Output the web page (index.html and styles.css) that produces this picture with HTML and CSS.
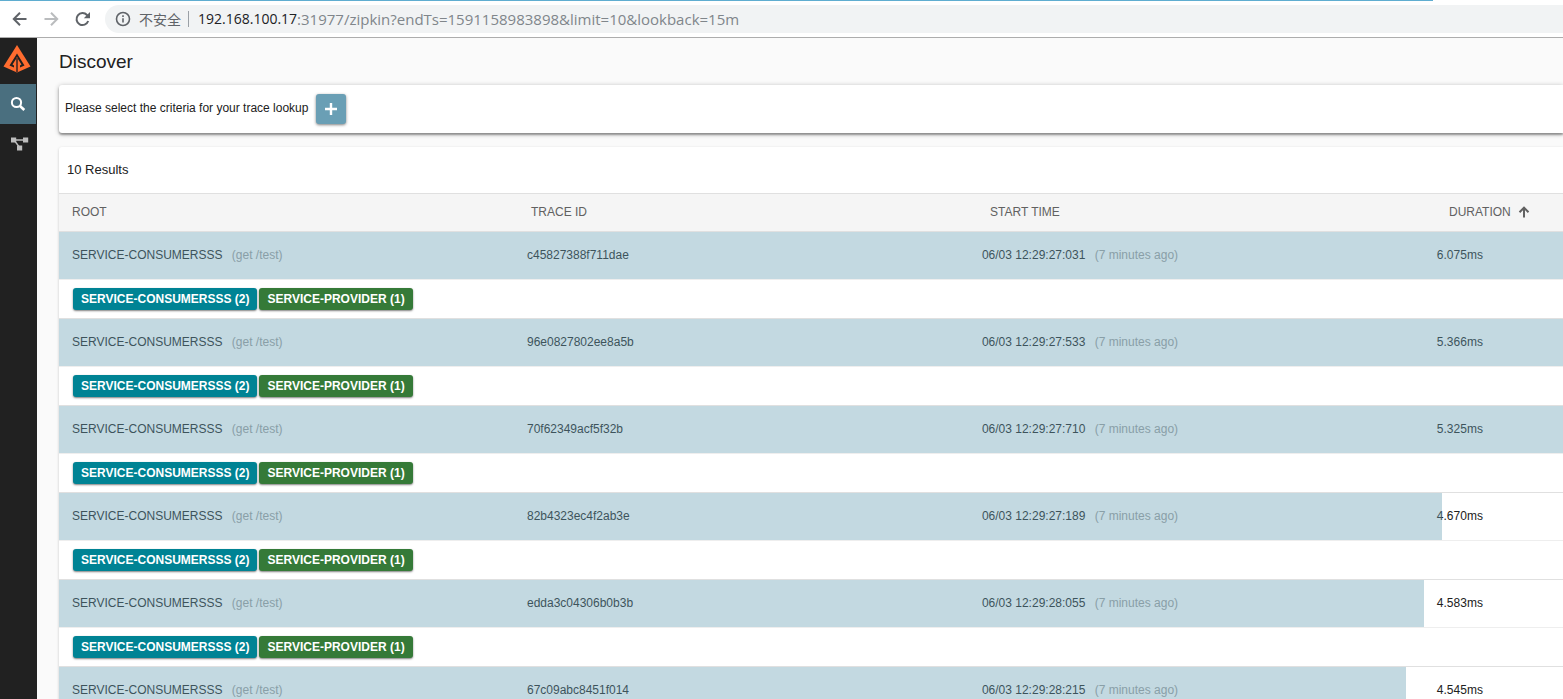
FILE: index.html
```
<!DOCTYPE html>
<html lang="en">
<head>
  <meta charset="UTF-8">
  <meta name="viewport" content="width=device-width, initial-scale=1.0">
  <title>Zipkin - Discover</title>
  <link rel="stylesheet" href="styles.css">
</head>
<body>
  <header class="browser-bar">
    <button class="nav-btn" aria-label="Back">
      <svg width="16" height="16" viewBox="0 0 16 16"><path d="M14.5 8H2M8 1.8L1.8 8L8 14.2"/></svg>
    </button>
    <button class="nav-btn disabled" aria-label="Forward">
      <svg width="16" height="16" viewBox="0 0 16 16"><path d="M1.5 8H14M8 1.8L14.2 8L8 14.2"/></svg>
    </button>
    <button class="nav-btn" aria-label="Reload">
      <svg width="16" height="16" viewBox="0 0 16 16"><path d="M14.2 10A6 6 0 1 1 13 4L14 5"/><path class="solid" d="M16 1V7.2H9.8Z"/></svg>
    </button>
    <div class="address">
      <svg class="info" width="16" height="16" viewBox="0 0 16 16"><circle cx="8" cy="8" r="6.5"/><path d="M8 7.2V11.6M8 4.3V6"/></svg>
      <span class="insecure">不安全</span>
      <label class="host" for="url">192.168.100.17</label>
      <input class="url" id="url" type="text" value=":31977/zipkin?endTs=1591158983898&amp;limit=10&amp;lookback=15m">
    </div>
  </header>

  <div class="app">
    <nav class="sidebar">
      <a class="logo" href="#" aria-label="Zipkin">
        <svg width="28" height="28" viewBox="0 0 28 28">
          <path fill="#ff6c2f" d="M14 0L27.5 21.5L14 27.5L0.5 21.5Z"/>
          <path fill="#212121" d="M14 8.5L21.5 20.5L17 22.6V20.4L18.5 19.6L14 12.5L9.5 19.6L11 20.4V22.6L6.5 20.5Z"/>
          <path fill="#6b3524" d="M13 12H15V27.2H13Z"/>
        </svg>
      </a>
      <a class="nav-link active" href="#" aria-label="Discover">
        <svg width="16" height="16" viewBox="0 0 16 16"><circle cx="6.5" cy="6.5" r="4.6" fill="none" stroke="#fff" stroke-width="2"/><path d="M10 10L14.3 14" stroke="#fff" stroke-width="2.6"/></svg>
      </a>
      <a class="nav-link" href="#" aria-label="Dependencies">
        <svg width="21" height="14" viewBox="-3 0 21 14"><path d="M3 3H15M3 3L9 11" stroke="#bdbdbd" stroke-width="1.4"/><path fill="#bdbdbd" d="M0 0.5H5.2V5.5H0ZM12 0.5H17.2V5.5H12ZM6 8.5H11.2V13.5H6Z"/></svg>
      </a>
    </nav>

    <main class="content">
      <h1>Discover</h1>
      <section class="paper search">
        <span class="hint">Please select the criteria for your trace lookup</span>
        <button class="add-btn" aria-label="Add criteria">
          <svg width="12" height="12" viewBox="0 0 12 12"><path d="M6 0V12M0 6H12" stroke="#fff" stroke-width="2.4"/></svg>
        </button>
      </section>

      <section class="paper results">
        <h2>10 Results</h2>
        <table class="traces">
          <thead>
            <tr>
              <th>ROOT</th>
              <th>TRACE ID</th>
              <th>START TIME</th>
              <th>
                <button class="sort-btn">DURATION
                  <svg width="12" height="12" viewBox="0 0 12 12"><path d="M6 11.5V2M1.5 6.2L6 1.7L10.5 6.2"/></svg>
                </button>
              </th>
            </tr>
          </thead>
          <tbody>
            <tr class="trace" style="--bar: 100%">
              <td>SERVICE-CONSUMERSSS <span class="sub">(get /test)</span></td>
              <td>c45827388f711dae</td>
              <td>06/03 12:29:27:031 <span class="sub">(7 minutes ago)</span></td>
              <td>6.075ms</td>
            </tr>
            <tr class="services">
              <td colspan="4"><span class="badge consumer">SERVICE-CONSUMERSSS (2)</span><span class="badge provider">SERVICE-PROVIDER (1)</span></td>
            </tr>
            <tr class="trace" style="--bar: 88%">
              <td>SERVICE-CONSUMERSSS <span class="sub">(get /test)</span></td>
              <td>96e0827802ee8a5b</td>
              <td>06/03 12:29:27:533 <span class="sub">(7 minutes ago)</span></td>
              <td>5.366ms</td>
            </tr>
            <tr class="services">
              <td colspan="4"><span class="badge consumer">SERVICE-CONSUMERSSS (2)</span><span class="badge provider">SERVICE-PROVIDER (1)</span></td>
            </tr>
            <tr class="trace" style="--bar: 87%">
              <td>SERVICE-CONSUMERSSS <span class="sub">(get /test)</span></td>
              <td>70f62349acf5f32b</td>
              <td>06/03 12:29:27:710 <span class="sub">(7 minutes ago)</span></td>
              <td>5.325ms</td>
            </tr>
            <tr class="services">
              <td colspan="4"><span class="badge consumer">SERVICE-CONSUMERSSS (2)</span><span class="badge provider">SERVICE-PROVIDER (1)</span></td>
            </tr>
            <tr class="trace" style="--bar: 76%">
              <td>SERVICE-CONSUMERSSS <span class="sub">(get /test)</span></td>
              <td>82b4323ec4f2ab3e</td>
              <td>06/03 12:29:27:189 <span class="sub">(7 minutes ago)</span></td>
              <td>4.670ms</td>
            </tr>
            <tr class="services">
              <td colspan="4"><span class="badge consumer">SERVICE-CONSUMERSSS (2)</span><span class="badge provider">SERVICE-PROVIDER (1)</span></td>
            </tr>
            <tr class="trace" style="--bar: 75%">
              <td>SERVICE-CONSUMERSSS <span class="sub">(get /test)</span></td>
              <td>edda3c04306b0b3b</td>
              <td>06/03 12:29:28:055 <span class="sub">(7 minutes ago)</span></td>
              <td>4.583ms</td>
            </tr>
            <tr class="services">
              <td colspan="4"><span class="badge consumer">SERVICE-CONSUMERSSS (2)</span><span class="badge provider">SERVICE-PROVIDER (1)</span></td>
            </tr>
            <tr class="trace" style="--bar: 74%">
              <td>SERVICE-CONSUMERSSS <span class="sub">(get /test)</span></td>
              <td>67c09abc8451f014</td>
              <td>06/03 12:29:28:215 <span class="sub">(7 minutes ago)</span></td>
              <td>4.545ms</td>
            </tr>
          </tbody>
        </table>
      </section>
    </main>
  </div>
</body>
</html>
```

FILE: styles.css
```
* {
  box-sizing: border-box;
  margin: 0;
  padding: 0;
}

body {
  display: flex;
  flex-direction: column;
  height: 100vh;
  overflow: hidden;
  font-family: "Liberation Sans", Arial, sans-serif;
  font-size: 12px;
  color: #212121;
  background-color: #fafafa;
}

button {
  border: none;
  background: none;
  font: inherit;
  color: inherit;
  cursor: pointer;
}

/* browser toolbar */
.browser-bar {
  display: flex;
  flex-shrink: 0;
  align-items: center;
  gap: 15px;
  height: 38px;
  padding-left: 12px;
  border-bottom: 1px solid #adadad;
  background: linear-gradient(#5fadd0, #5fadd0) left top / calc(100% - 130px) 1px no-repeat #fff;
}

.nav-btn {
  display: flex;
}

.nav-btn svg {
  fill: none;
  stroke: #5f6368;
  stroke-width: 2;
}

.nav-btn.disabled svg {
  stroke: #babcbe;
}

.nav-btn .solid {
  fill: #5f6368;
  stroke: none;
}

.address {
  display: flex;
  flex: 1;
  align-items: center;
  height: 28px;
  padding-left: 10px;
  border-radius: 14px 0 0 14px;
  background-color: #f1f3f4;
  font-family: "Open Sans", "Noto Sans CJK SC", sans-serif;
  font-size: 14px;
  color: #80868b;
}

.info {
  fill: none;
  stroke: #5f6368;
  stroke-width: 1.6;
}

.insecure {
  margin: 0 9px 0 8px;
  padding-right: 7px;
  border-right: 1px solid #9aa0a6;
  font-family: "Noto Sans CJK SC", sans-serif;
  line-height: 16px;
  color: #5f6368;
}

.host {
  color: #202124;
}

.url {
  flex: 1;
  border: none;
  outline: none;
  background: none;
  font: inherit;
  font-size: 15px;
  color: inherit;
}

/* application */
.app {
  display: flex;
  flex: 1;
  min-height: 0;
}

.sidebar {
  flex-shrink: 0;
  width: 37px;
  padding-right: 1px;
  background-color: #212121;
}

.logo,
.nav-link {
  display: flex;
  align-items: center;
  justify-content: center;
  height: 40px;
}

.logo {
  height: 46px;
  padding: 0 2px 4px 0;
}

.active {
  background-color: #4a6f7f;
}

.content {
  flex: 1;
  min-width: 0;
  padding-left: 22px;
}

h1 {
  font-size: 19px;
  font-weight: normal;
  line-height: 47px;
}

.paper {
  border-radius: 3px 0 0 3px;
  background-color: #fff;
}

.search {
  display: flex;
  align-items: center;
  gap: 8px;
  height: 48px;
  margin-bottom: 14px;
  padding-left: 6px;
  box-shadow: 0 1px 5px rgba(0, 0, 0, 0.3), 0 2px 2px rgba(0, 0, 0, 0.3);
}

.hint {
  padding-bottom: 2px;
}

.add-btn {
  display: flex;
  align-items: center;
  justify-content: center;
  width: 30px;
  height: 30px;
  border-radius: 3px;
  background-color: #6a9fb5;
  box-shadow: 0 1px 3px rgba(0, 0, 0, 0.5);
}

.results {
  overflow: hidden;
  box-shadow: 0 1px 3px rgba(0, 0, 0, 0.2);
}

h2 {
  padding-left: 8px;
  font-size: 13px;
  font-weight: normal;
  line-height: 46px;
}

/* the table is wider than the window and runs off its right edge */
.traces {
  display: block;
  width: 121%;
}

thead,
tbody {
  display: block;
}

tr {
  display: grid;
  align-items: center;
  grid-template-columns: repeat(4, 25%);
  border-bottom: 1px solid #e0e0e0;
}

th,
td {
  padding: 0 0 2px 13px;
  font-weight: normal;
  text-align: left;
}

thead tr {
  grid-template-columns: repeat(4, 459px);
  height: 39px;
  border-top: 1px solid #e0e0e0;
  background-color: #f5f5f5;
  color: #616161;
}

.sort-btn {
  display: flex;
  align-items: center;
  gap: 7px;
}

.sort-btn svg {
  fill: none;
  stroke: #616161;
  stroke-width: 2;
}

.trace {
  position: relative;
  height: 48px;
  border-bottom-color: #eee;
}

/* duration bar, laid over the row */
.trace::before {
  content: "";
  position: absolute;
  top: 0;
  bottom: 0;
  left: 0;
  width: var(--bar);
  background-color: #6a9fb5;
  opacity: 0.4;
}

.sub {
  margin-left: 6px;
  color: #9e9e9e;
}

.services {
  height: 39px;
}

.services td {
  display: flex;
  grid-column: 1 / -1;
  gap: 2px;
  padding: 0 0 0 14px;
}

.badge {
  padding: 0 8px;
  border-radius: 3px;
  box-shadow: 0 1px 2px rgba(0, 0, 0, 0.5);
  font-weight: bold;
  line-height: 22px;
  color: #fff;
}

.consumer {
  background-color: #008394;
}

.provider {
  background-color: #357a38;
}
```
